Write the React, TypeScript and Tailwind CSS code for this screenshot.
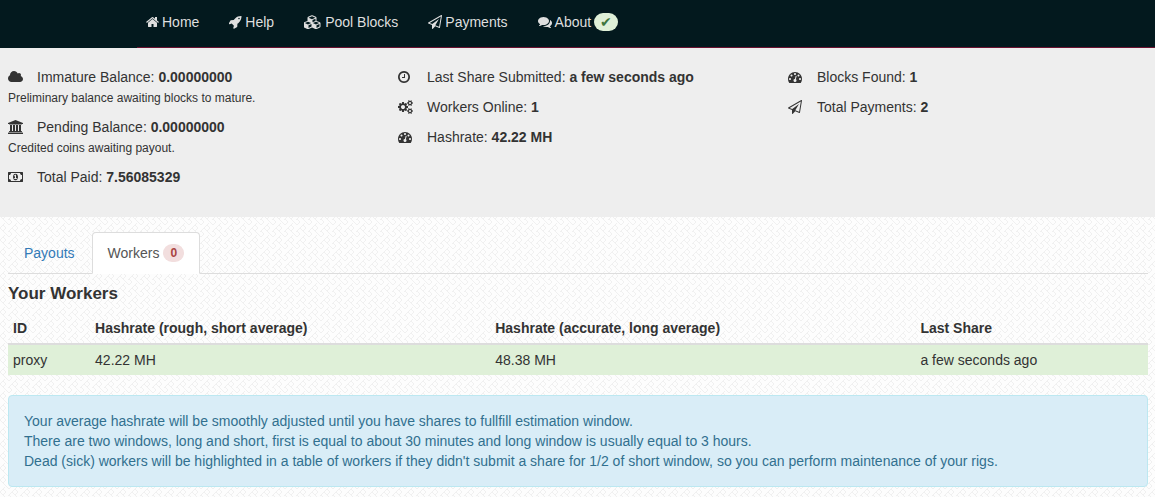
import type { ReactNode } from "react";

type IconShape = { x: number; width: number; d: string };

const icons = {
  home: {
    x: 64,
    width: 1664,
    d: "M1472 992v480q0 26-19 45t-45 19h-384v-384h-256v384h-384q-26 0-45-19t-19-45v-480q0-1 .5-3t.5-3l575-474 575 474q1 2 1 6zm223-69l-62 74q-8 9-21 11h-3q-13 0-21-7l-692-577-692 577q-12 8-24 7-13-2-21-11l-62-74q-8-10-7-23.5t11-21.5l719-599q32-26 76-26t76 26l244 204v-195q0-14 9-23t23-9h192q14 0 23 9t9 23v408l219 182q10 8 11 21.5t-7 23.5z",
  },
  rocket: {
    x: 64,
    width: 1664,
    d: "M1440 448q0-40-28-68t-68-28-68 28-28 68 28 68 68 28 68-28 28-68zm224-288q0 249-75.5 430.5t-253.5 360.5q-81 80-195 176l-20 379q-2 16-16 26l-384 224q-7 4-16 4-12 0-23-9l-64-64q-13-14-8-32l85-276-281-281-276 85q-3 1-9 1-14 0-23-9l-64-64q-17-19-5-39l224-384q10-14 26-16l379-20q96-114 176-195 188-187 358-258t431-71q14 0 24 9.5t10 22.5z",
  },
  cubes: {
    x: 0,
    width: 2304,
    d: "M576 1665l384-192v-314l-384 164v342zm-64-454l404-173-404-173-404 173zm1088 454l384-192v-314l-384 164v342zm-64-454l404-173-404-173-404 173zm-448-293l384-165v-266l-384 164v267zm-64-379l441-189-441-189-441 189zm1088 518v416q0 36-19 67t-52 47l-448 224q-25 14-57 14t-57-14l-448-224q-5-2-7-4-2 2-7 4l-448 224q-25 14-57 14t-57-14l-448-224q-33-16-52-47t-19-67v-416q0-38 21.5-70t56.5-48l434-186v-400q0-38 21.5-70t56.5-48l448-192q23-10 50-10t50 10l448 192q35 16 56.5 48t21.5 70v400l434 186q36 16 57 48t21 70z",
  },
  plane: {
    x: 0,
    width: 1792,
    d: "M1764 11q33 24 27 64l-256 1536q-5 29-32 45-14 8-31 8-11 0-24-5l-527-215-298 327q-18 21-47 21-14 0-23-4-19-7-30-23.5t-11-36.5v-452l-472-193q-37-14-40-55-3-39 32-59l1664-960q35-21 68 2zm-342 1499l221-1323-1434 827 336 137 863-639-478 797z",
  },
  comments: {
    x: 0,
    width: 1792,
    d: "M1408 768q0 139-94 257t-256.5 186.5-353.5 68.5q-86 0-176-16-124 88-278 128-36 9-86 16h-3q-11 0-20.5-8t-11.5-21q-1-3-1-6.5t.5-6.5 2-6l2.5-5 3.5-5.5 4-5 4.5-5 4-4.5q5-6 23-25t26-29.5 22.5-29 25-38.5 20.5-44q-124-72-195-177t-71-224q0-139 94-257t256.5-186.5 353.5-68.5 353.5 68.5 256.5 186.5 94 257zm384 256q0 120-71 224.5t-195 176.5q10 24 20.5 44t25 38.5 22.5 29 26 29.5 23 25q1 1 4 4.5t4.5 5 4 5 3.5 5.5l2.5 5 2 6 .5 6.5-1 6.5q-3 14-13 22t-22 7q-50-7-86-16-154-40-278-128-90 16-176 16-271 0-472-132 58 4 88 4 161 0 309-45t264-129q125-92 192-212t67-254q0-77-23-152 129 71 204 178t75 230z",
  },
  cloud: {
    x: 64,
    width: 1920,
    d: "M1984 1152q0 159-112.5 271.5t-271.5 112.5h-1088q-185 0-316.5-131.5t-131.5-316.5q0-132 71-241.5t187-163.5q-2-28-2-43 0-212 150-362t362-150q158 0 286.5 88t187.5 230q70-62 166-62 106 0 181 75t75 181q0 75-41 138 129 30 213 134.5t84 239.5z",
  },
  bank: {
    x: 0,
    width: 1920,
    d: "M960 0l960 384v128h-128q0 26-20.5 45t-48.5 19h-1526q-28 0-48.5-19t-20.5-45h-128v-128zm-704 640h256v768h128v-768h256v768h128v-768h256v768h128v-768h256v768h59q28 0 48.5 19t20.5 45v64h-1664v-64q0-26 20.5-45t48.5-19h59v-768zm1595 960q28 0 48.5 19t20.5 45v128h-1920v-128q0-26 20.5-45t48.5-19h1782z",
  },
  money: {
    x: -64,
    width: 1920,
    d: "M704 1152h384v-96h-128v-448h-114l-148 137 77 80q42-37 55-57h2v288h-128v96zm512-256q0 70-21 142t-59.5 134-101.5 101-138 39-138-39-101.5-101-59.5-134-21-142 21-142 59.5-134 101.5-101 138-39 138 39 101.5 101 59.5 134 21 142zm512 256v-512q-106 0-181-75t-75-181h-1152q0 106-75 181t-181 75v512q106 0 181 75t75 181h1152q0-106 75-181t181-75zm128-832v1152q0 26-19 45t-45 19h-1792q-26 0-45-19t-19-45v-1152q0-26 19-45t45-19h1792q26 0 45 19t19 45z",
  },
  clock: {
    x: 128,
    width: 1536,
    d: "M1024 544v448q0 14-9 23t-23 9h-320q-14 0-23-9t-9-23v-64q0-14 9-23t23-9h224v-352q0-14 9-23t23-9h64q14 0 23 9t9 23zm416 352q0-148-73-273t-198-198-273-73-273 73-198 198-73 273 73 273 198 198 273 73 273-73 198-198 73-273zm224 0q0 209-103 385.5t-279.5 279.5-385.5 103-385.5-103-279.5-279.5-103-385.5 103-385.5 279.5-279.5 385.5-103 385.5 103 279.5 279.5 103 385.5z",
  },
  cogs: {
    x: 0,
    width: 1920,
    d: "M896 896q0-106-75-181t-181-75-181 75-75 181 75 181 181 75 181-75 75-181zm768 512q0-52-38-90t-90-38-90 38-38 90q0 53 37.5 90.5t90.5 37.5 90.5-37.5 37.5-90.5zm0-1024q0-52-38-90t-90-38-90 38-38 90q0 53 37.5 90.5t90.5 37.5 90.5-37.5 37.5-90.5zm-384 421v185q0 10-7 19.5t-16 10.5l-155 24q-11 35-32 76 34 48 90 115 7 11 7 20 0 12-7 19-23 30-82.5 89.5t-78.5 59.5q-11 0-21-7l-115-90q-37 19-77 31-11 108-23 155-7 24-30 24h-186q-11 0-20-7.5t-10-17.5l-23-153q-34-10-75-31l-118 89q-7 7-20 7-11 0-21-8-144-133-144-160 0-9 7-19 10-14 41-53t47-61q-23-44-35-82l-152-24q-10-1-17-9.5t-7-19.5v-185q0-10 7-19.5t16-10.5l155-24q11-35 32-76-34-48-90-115-7-11-7-20 0-12 7-20 22-30 82-89t79-59q11 0 21 7l115 90q34-18 77-32 11-108 23-154 7-24 30-24h186q11 0 20 7.5t10 17.5l23 153q34 10 75 31l118-89q8-7 20-7 11 0 21 8 144 133 144 160 0 8-7 19-12 16-42 54t-45 60q23 48 34 82l152 23q10 2 17 10.5t7 19.5zm640 533v140q0 16-149 31-12 27-30 52 51 113 51 138 0 4-4 7-122 71-124 71-8 0-46-47t-52-68q-20 2-30 2t-30-2q-14 21-52 68t-46 47q-2 0-124-71-4-3-4-7 0-25 51-138-18-25-30-52-149-15-149-31v-140q0-16 149-31 13-29 30-52-51-113-51-138 0-4 4-7 4-2 35-20t59-34 30-16q8 0 46 46.5t52 67.5q20-2 30-2t30 2q51-71 92-112l6-2q4 0 124 70 4 3 4 7 0 25-51 138 17 23 30 52 149 15 149 31zm0-1024v140q0 16-149 31-12 27-30 52 51 113 51 138 0 4-4 7-122 71-124 71-8 0-46-47t-52-68q-20 2-30 2t-30-2q-14 21-52 68t-46 47q-2 0-124-71-4-3-4-7 0-25 51-138-18-25-30-52-149-15-149-31v-140q0-16 149-31 13-29 30-52-51-113-51-138 0-4 4-7 4-2 35-20t59-34 30-16q8 0 46 46.5t52 67.5q20-2 30-2t30 2q51-71 92-112l6-2q4 0 124 70 4 3 4 7 0 25-51 138 17 23 30 52 149 15 149 31z",
  },
  gauge: {
    x: 0,
    width: 1792,
    d: "M384 1152q0-53-37.5-90.5t-90.5-37.5-90.5 37.5-37.5 90.5 37.5 90.5 90.5 37.5 90.5-37.5 37.5-90.5zm192-448q0-53-37.5-90.5t-90.5-37.5-90.5 37.5-37.5 90.5 37.5 90.5 90.5 37.5 90.5-37.5 37.5-90.5zm428 481l101-382q6-26-7.5-48.5t-38.5-29.5-48 6.5-30 39.5l-101 382q-60 5-107 43.5t-63 98.5q-20 77 20 146t117 89 146-20 89-117q16-60-6-117t-72-91zm660-33q0-53-37.5-90.5t-90.5-37.5-90.5 37.5-37.5 90.5 37.5 90.5 90.5 37.5 90.5-37.5 37.5-90.5zm-640-640q0-53-37.5-90.5t-90.5-37.5-90.5 37.5-37.5 90.5 37.5 90.5 90.5 37.5 90.5-37.5 37.5-90.5zm448 192q0-53-37.5-90.5t-90.5-37.5-90.5 37.5-37.5 90.5 37.5 90.5 90.5 37.5 90.5-37.5 37.5-90.5zm320 448q0 261-141 483-19 29-54 29h-1402q-35 0-54-29-141-221-141-483 0-182 71-348t191-286 286-191 348-71 348 71 286 191 191 286 71 348z",
  },
} satisfies Record<string, IconShape>;

type IconName = keyof typeof icons;

function Icon({ name }: { name: IconName }) {
  const { x, width, d } = icons[name];
  return (
    <svg viewBox={`${x} 0 ${width} 1792`} className="h-3.5 w-auto shrink-0 fill-current" aria-hidden="true">
      <path d={d} />
    </svg>
  );
}

function NavLink({ icon, children }: { icon: IconName; children: ReactNode }) {
  return (
    <li>
      <a href="#" className="flex items-center gap-[3px] text-[#dfdfdf] hover:text-white">
        <Icon name={icon} />
        {children}
      </a>
    </li>
  );
}

function Stat({ icon, label, value, note }: { icon: IconName; label: string; value: string; note?: string }) {
  return (
    <div>
      <div className="flex items-center">
        <span className="w-[29px] shrink-0">
          <Icon name={icon} />
        </span>
        <span>
          {label}: <b>{value}</b>
        </span>
      </div>
      {note && <small className="block pt-0.5 text-xs leading-[18px]">{note}</small>}
    </div>
  );
}

const workers = [{ id: "proxy", short: "42.22 MH", long: "48.38 MH", last: "a few seconds ago" }];

export default function App() {
  return (
    <div className="min-h-screen bg-[#fdfdfd] bg-[url('data:image/svg+xml,%3Csvg%20xmlns=%22http://www.w3.org/2000/svg%22%20width=%2212%22%20height=%2212%22%3E%3Cpath%20d=%22M0%200l9%209M12%200l-4%204M5%207l-5%205M6%2012l-3-3M12%206l-3%203M6%200l-3%203M12%206l-3-3%22%20stroke=%22%23f0f0f0%22%20fill=%22none%22/%3E%3C/svg%3E')] pb-2.5 font-['Liberation_Sans',Arial,sans-serif] text-sm leading-5 text-[#333333]">
      <nav className="flex bg-[#03191e] pl-[137px]">
        <ul className="flex flex-1 gap-[30px] border-b border-[#6b1230] pt-3 pb-[15px] pl-[9px]">
          <NavLink icon="home">Home</NavLink>
          <NavLink icon="rocket">Help</NavLink>
          <NavLink icon="cubes">Pool Blocks</NavLink>
          <NavLink icon="plane">Payments</NavLink>
          <NavLink icon="comments">
            About
            <span className="rounded-full bg-[#dff0d8] px-1.5 text-sm leading-[18px] text-[#3c763d]">✔</span>
          </NavLink>
        </ul>
      </nav>

      <section className="grid grid-cols-3 gap-x-[30px] bg-[#eeeeee] pt-[19px] pr-[7px] pb-[30px] pl-2">
        <div className="flex flex-col gap-2.5">
          <Stat icon="cloud" label="Immature Balance" value="0.00000000" note="Preliminary balance awaiting blocks to mature." />
          <Stat icon="bank" label="Pending Balance" value="0.00000000" note="Credited coins awaiting payout." />
          <Stat icon="money" label="Total Paid" value="7.56085329" />
        </div>
        <div className="flex flex-col gap-2.5">
          <Stat icon="clock" label="Last Share Submitted" value="a few seconds ago" />
          <Stat icon="cogs" label="Workers Online" value="1" />
          <Stat icon="gauge" label="Hashrate" value="42.22 MH" />
        </div>
        <div className="flex flex-col gap-2.5">
          <Stat icon="gauge" label="Blocks Found" value="1" />
          <Stat icon="plane" label="Total Payments" value="2" />
        </div>
      </section>

      <main className="pt-[15px] pr-[7px] pl-2">
        <ul className="flex border-b border-[#dddddd]">
          <li className="-mb-px">
            <a href="#" className="mr-px block rounded-t border border-transparent px-[15px] py-2.5 text-[#337ab7]">
              Payouts
            </a>
          </li>
          <li className="-mb-px">
            <a
              href="#"
              aria-current="page"
              className="flex items-center gap-1 rounded-t border border-[#dddddd] border-b-transparent bg-white px-[15px] py-2.5 text-[#555555]"
            >
              Workers
              <span className="rounded-full bg-[#f2dede] px-[7px] text-xs leading-[18px] font-bold text-[#a94442]">0</span>
            </a>
          </li>
        </ul>

        <h4 className="mt-2.5 mb-[9px] text-[17px] leading-5 font-bold">Your Workers</h4>

        <table className="w-full table-fixed border-collapse text-left">
          <thead>
            <tr className="border-b-2 border-[#dddddd]">
              <th className="w-[7.2%] p-[5px]">ID</th>
              <th className="w-[35.1%] p-[5px]">Hashrate (rough, short average)</th>
              <th className="w-[37.3%] p-[5px]">Hashrate (accurate, long average)</th>
              <th className="p-[5px]">Last Share</th>
            </tr>
          </thead>
          <tbody>
            {workers.map((w) => (
              <tr key={w.id} className="bg-[#dff0d8]">
                <td className="p-[5px]">{w.id}</td>
                <td className="p-[5px]">{w.short}</td>
                <td className="p-[5px]">{w.long}</td>
                <td className="p-[5px]">{w.last}</td>
              </tr>
            ))}
          </tbody>
        </table>

        <div className="mt-5 rounded border border-[#bce8f1] bg-[#d9edf7] p-[15px] text-[#31708f]">
          <p>Your average hashrate will be smoothly adjusted until you have shares to fullfill estimation window.</p>
          <p>There are two windows, long and short, first is equal to about 30 minutes and long window is usually equal to 3 hours.</p>
          <p>
            Dead (sick) workers will be highlighted in a table of workers if they didn't submit a share for 1/2 of short window, so
            you can perform maintenance of your rigs.
          </p>
        </div>
      </main>
    </div>
  );
}
